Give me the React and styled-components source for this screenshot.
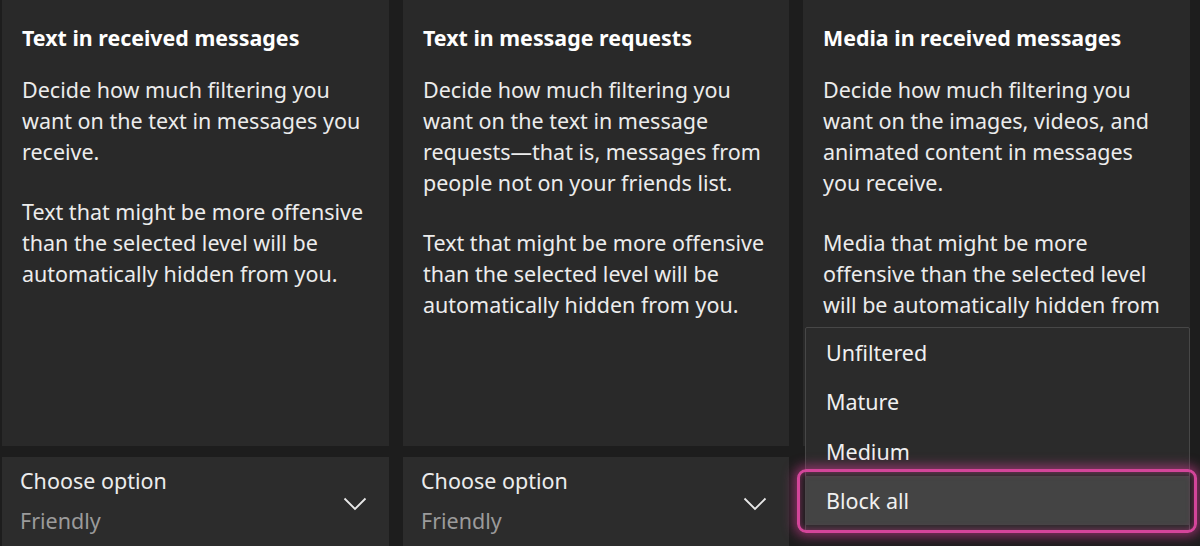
import React from "react";
import styled, { createGlobalStyle } from "styled-components";

const Global = createGlobalStyle`
  html, body { margin: 0; padding: 0; background: #1d1d1d; overflow: hidden; }
  body { font-family: "Noto Sans", "Open Sans", sans-serif; -webkit-font-smoothing: antialiased; }
`;

const Page = styled.div`
  width: 1200px;
  height: 546px;
  overflow: hidden;
  background: #1d1d1d;
  display: grid;
  grid-template-columns: 387px 386px 387px;
  column-gap: 14px;
  padding-left: 2px;
  box-sizing: border-box;
`;

const Column = styled.div`
  position: relative;
  display: flex;
  flex-direction: column;
  gap: 11px;
`;

const Panel = styled.section`
  height: 446px;
  box-sizing: border-box;
  background: #292929;
  padding: 22px 20px 0 20px;
  color: #ececec;
  overflow: hidden;
`;

const Title = styled.h2`
  margin: 0 0 20px 0;
  font-size: 21.4px;
  line-height: 32px;
  font-weight: 700;
  color: #ffffff;
  white-space: nowrap;
`;

const Para = styled.p`
  margin: 0 0 29px 0;
  font-size: 21.5px;
  line-height: 31px;
  color: #ececec;
  white-space: pre-line;
`;

const Select = styled.div`
  height: 100px;
  box-sizing: border-box;
  background: #2c2c2c;
  padding: 8px 20px 0 18px;
  display: flex;
  align-items: flex-start;
  justify-content: space-between;
`;

const SelectText = styled.div`
  display: flex;
  flex-direction: column;
`;

const SelectLabel = styled.span`
  font-size: 21.5px;
  line-height: 32px;
  color: #ececec;
`;

const SelectValue = styled.span`
  font-size: 21.5px;
  line-height: 32px;
  margin-top: 8px;
  color: #9b9b9b;
`;

const Chevron = styled.svg`
  margin-top: 32px;
  margin-right: 2px;
  width: 24px;
  height: 14px;
`;

const Menu = styled.ul`
  position: absolute;
  top: 327px;
  left: 2px;
  right: 0;
  margin: 0;
  padding: 0;
  list-style: none;
  background: #2b2b2b;
  border: 1px solid #474747;
  border-radius: 2px;
  height: 205px;
  box-sizing: border-box;
  z-index: 2;
`;

const Item = styled.li`
  position: relative;
  height: 49.3px;
  display: flex;
  align-items: center;
  padding-left: 20px;
  font-size: 21.5px;
  color: #f0f0f0;
  background: ${(p) => (p.$selected ? "#444444" : "transparent")};
  ${(p) =>
    p.$selected &&
    `
    &::after {
      content: "";
      position: absolute;
      inset: -7px -8px -8px -9px;
      border: 3px solid #d4459a;
      border-radius: 9px;
      box-shadow: 0 0 12px 3px rgba(214, 60, 150, 0.6), inset 0 0 7px rgba(214, 60, 150, 0.55);
      pointer-events: none;
    }
  `}
`;

const columns = [
  {
    title: "Text in received messages",
    paras: [
      "Decide how much filtering you\nwant on the text in messages you\nreceive.",
      "Text that might be more offensive\nthan the selected level will be\nautomatically hidden from you.",
    ],
  },
  {
    title: "Text in message requests",
    paras: [
      "Decide how much filtering you\nwant on the text in message\nrequests\u2014that is, messages from\npeople not on your friends list.",
      "Text that might be more offensive\nthan the selected level will be\nautomatically hidden from you.",
    ],
  },
  {
    title: "Media in received messages",
    paras: [
      "Decide how much filtering you\nwant on the images, videos, and\nanimated content in messages\nyou receive.",
      "Media that might be more\noffensive than the selected level\nwill be automatically hidden from",
    ],
    menu: true,
  },
];

const options = ["Unfiltered", "Mature", "Medium", "Block all"];

export default function App() {
  return (
    <>
      <Global />
      <Page>
        {columns.map((c) => (
          <Column key={c.title}>
            <Panel>
              <Title>{c.title}</Title>
              {c.paras.map((p, i) => (
                <Para key={i}>{p}</Para>
              ))}
            </Panel>
            {c.menu ? (
              <Menu>
                {options.map((o) => (
                  <Item key={o} $selected={o === "Block all"}>
                    {o}
                  </Item>
                ))}
              </Menu>
            ) : (
              <Select>
                <SelectText>
                  <SelectLabel>Choose option</SelectLabel>
                  <SelectValue>Friendly</SelectValue>
                </SelectText>
                <Chevron viewBox="0 0 24 14" fill="none">
                  <path d="M1.5 1.5 L12 12 L22.5 1.5" stroke="#e8e8e8" strokeWidth="1.8" />
                </Chevron>
              </Select>
            )}
          </Column>
        ))}
      </Page>
    </>
  );
}
